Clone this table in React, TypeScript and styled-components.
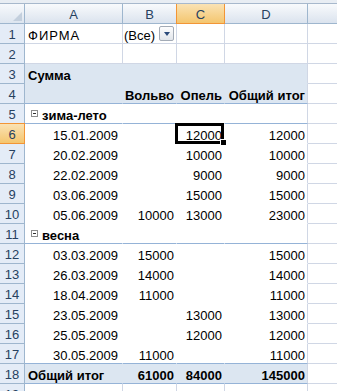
import * as React from 'react'
import styled, { createGlobalStyle } from 'styled-components'

const GRID = '#d0d7e5'
const HEAD_LINE = '#9eb6ce'
const PIVOT = '#dce6f1'
const PIVOT_LINE = '#95b3d7'
const ACTIVE_LINE = '#f29536'
const COLS = '25px 98px 54px 48px 83px 64px'

const GlobalStyle = createGlobalStyle`
  html, body { margin: 0; padding: 0; background: #fff; overflow: hidden; }
  body {
    font-family: "Liberation Sans", Arial, sans-serif;
    font-size: 13px;
    color: #000;
  }
`

const Sheet = styled.div`
  width: max-content;
`

const TopStrip = styled.div`
  height: 3px;
  background: #e8edf3;
  border-bottom: 1px solid #a7b8cc;
`

const Row = styled.div`
  display: grid;
  grid-template-columns: ${COLS};
  height: 20px;
`

const Corner = styled.div`
  position: relative;
  box-sizing: border-box;
  background: linear-gradient(#f7f9fc, #dde5ef);
  border-right: 1px solid ${HEAD_LINE};
  border-bottom: 1px solid ${HEAD_LINE};
  &::after {
    content: '';
    position: absolute;
    right: 2px;
    bottom: 2px;
    border-style: solid;
    border-width: 0 0 9px 9px;
    border-color: transparent transparent #c3cfdd transparent;
  }
`

const ColHead = styled.div<{ $active?: boolean }>`
  box-sizing: border-box;
  display: flex;
  align-items: flex-end;
  justify-content: center;
  padding-bottom: 1px;
  line-height: 15px;
  color: #27415f;
  background: ${p => (p.$active ? 'linear-gradient(#fae2b4, #f4c66f)' : 'linear-gradient(#f8fafc, #dbe3ee)')};
  border-right: 1px solid ${p => (p.$active ? ACTIVE_LINE : HEAD_LINE)};
  border-bottom: 1px solid ${p => (p.$active ? ACTIVE_LINE : HEAD_LINE)};
  box-shadow: ${p => (p.$active ? `-1px 0 0 ${ACTIVE_LINE}` : 'none')};
`

const RowHead = styled.div<{ $active?: boolean }>`
  box-sizing: border-box;
  display: flex;
  align-items: flex-end;
  justify-content: center;
  padding-bottom: 1px;
  line-height: 15px;
  color: #27415f;
  background: ${p => (p.$active ? 'linear-gradient(#fae2b4, #f4c66f)' : '#e4ecf7')};
  border-right: 1px solid ${p => (p.$active ? ACTIVE_LINE : HEAD_LINE)};
  border-bottom: 1px solid ${p => (p.$active ? ACTIVE_LINE : HEAD_LINE)};
  box-shadow: ${p => (p.$active ? `0 -1px 0 ${ACTIVE_LINE}` : 'none')};
`

interface ICellProps {
  $bg: string
  $bottom: string
  $right: string
  $bold?: boolean
  $align?: 'left' | 'right'
  $padL?: number
  $padR?: number
  $selected?: boolean
}

const Cell = styled.div<ICellProps>`
  position: relative;
  z-index: ${p => (p.$selected ? 1 : 'auto')};
  box-sizing: border-box;
  display: flex;
  align-items: flex-end;
  justify-content: ${p => (p.$align === 'right' ? 'flex-end' : 'flex-start')};
  padding: 0 ${p => p.$padR ?? 2}px 0 ${p => p.$padL ?? 3}px;
  line-height: 15px;
  white-space: nowrap;
  font-weight: ${p => (p.$bold ? 700 : 400)};
  background: ${p => p.$bg};
  border-right: 1px solid ${p => p.$right};
  border-bottom: 1px solid ${p => p.$bottom};
  &::after {
    content: '';
    display: ${p => (p.$selected ? 'block' : 'none')};
    position: absolute;
    left: -2px;
    top: -1px;
    right: 0;
    bottom: -1px;
    border: 3px solid #000;
  }
  &::before {
    content: '';
    display: ${p => (p.$selected ? 'block' : 'none')};
    position: absolute;
    right: -2px;
    bottom: -2px;
    width: 5px;
    height: 5px;
    background: #000;
    outline: 1px solid #fff;
    z-index: 1;
  }
`

// the page field caption is drawn a little wider in Excel than in Arial
const FieldName = styled.span`
  letter-spacing: 1px;
`

const MinusBox = styled.span`
  box-sizing: border-box;
  width: 7px;
  height: 7px;
  margin: 0 4px 6px 3px;
  border: 1px solid #8d8d8d;
  background: #fff;
  display: flex;
  align-items: center;
  justify-content: center;
  &::after {
    content: '';
    width: 3px;
    height: 1px;
    background: #333;
  }
`

const DropButton = styled.span`
  box-sizing: border-box;
  width: 15px;
  height: 15px;
  margin-left: auto;
  align-self: center;
  border: 1px solid #a3abb6;
  border-radius: 2px;
  background: linear-gradient(#fdfdfe, #e1e5ea);
  display: flex;
  align-items: center;
  justify-content: center;
  &::after {
    content: '';
    border-style: solid;
    border-width: 4px 3px 0 3px;
    border-color: #2a4a7a transparent transparent transparent;
  }
`

type Kind = 'plain' | 'title' | 'header' | 'group' | 'item' | 'itemLast' | 'total'

interface IRow {
  n: number
  kind: Kind
  cells: string[]
}

const rows: IRow[] = [
  { n: 1, kind: 'plain', cells: ['ФИРМА', '(Все)', '', ''] },
  { n: 2, kind: 'plain', cells: ['', '', '', ''] },
  { n: 3, kind: 'title', cells: ['Сумма', '', '', ''] },
  { n: 4, kind: 'header', cells: ['', 'Вольво', 'Опель', 'Общий итог'] },
  { n: 5, kind: 'group', cells: ['зима-лето', '', '', ''] },
  { n: 6, kind: 'item', cells: ['15.01.2009', '', '12000', '12000'] },
  { n: 7, kind: 'item', cells: ['20.02.2009', '', '10000', '10000'] },
  { n: 8, kind: 'item', cells: ['22.02.2009', '', '9000', '9000'] },
  { n: 9, kind: 'item', cells: ['03.06.2009', '', '15000', '15000'] },
  { n: 10, kind: 'item', cells: ['05.06.2009', '10000', '13000', '23000'] },
  { n: 11, kind: 'group', cells: ['весна', '', '', ''] },
  { n: 12, kind: 'item', cells: ['03.03.2009', '15000', '', '15000'] },
  { n: 13, kind: 'item', cells: ['26.03.2009', '14000', '', '14000'] },
  { n: 14, kind: 'item', cells: ['18.04.2009', '11000', '', '11000'] },
  { n: 15, kind: 'item', cells: ['23.05.2009', '', '13000', '13000'] },
  { n: 16, kind: 'item', cells: ['25.05.2009', '', '12000', '12000'] },
  { n: 17, kind: 'itemLast', cells: ['30.05.2009', '11000', '', '11000'] },
  { n: 18, kind: 'total', cells: ['Общий итог', '61000', '84000', '145000'] },
  { n: 19, kind: 'plain', cells: ['', '', '', ''] },
]

const bgOf = (k: Kind) => (k === 'title' || k === 'header' || k === 'total' ? PIVOT : '#fff')

const bottomOf = (k: Kind) => {
  switch (k) {
    case 'plain':
      return GRID
    case 'title':
      return PIVOT
    case 'item':
      return '#fff'
    default:
      return PIVOT_LINE
  }
}

const renderCell = (row: IRow, col: number) => {
  const { kind, cells, n } = row
  const text = cells[col]
  const bg = bgOf(kind)
  const right = col === 3 || kind === 'plain' ? GRID : bg
  const bold = kind === 'title' || kind === 'header' || kind === 'total' || (kind === 'group' && col === 0)
  const isDate = (kind === 'item' || kind === 'itemLast') && col === 0
  const align = col > 0 || isDate ? 'right' : 'left'
  const selected = n === 6 && col === 2

  if (n === 1 && col === 0) {
    return (
      <Cell key={col} $bg={bg} $bottom={bottomOf(kind)} $right={right}>
        <FieldName>{text}</FieldName>
      </Cell>
    )
  }
  if (n === 1 && col === 1) {
    return (
      <Cell key={col} $bg={bg} $bottom={bottomOf(kind)} $right={right} $padL={1} $padR={2}>
        {text}
        <DropButton />
      </Cell>
    )
  }
  return (
    <Cell
      key={col}
      $bg={bg}
      $bottom={bottomOf(kind)}
      $right={right}
      $bold={bold}
      $align={align}
      $padR={isDate ? 4 : 2}
      $selected={selected}
    >
      {kind === 'group' && col === 0 && <MinusBox />}
      {text}
    </Cell>
  )
}

export default function App() {
  return (
    <>
      <GlobalStyle />
      <Sheet>
        <TopStrip />
        <Row>
          <Corner />
          {['A', 'B', 'C', 'D'].map(c => (
            <ColHead key={c} $active={c === 'C'}>{c}</ColHead>
          ))}
          <ColHead />
        </Row>
        {rows.map(r => (
          <Row key={r.n}>
            <RowHead $active={r.n === 6}>{r.n}</RowHead>
            {[0, 1, 2, 3].map(c => renderCell(r, c))}
            <Cell $bg="#fff" $bottom={GRID} $right={GRID} />
          </Row>
        ))}
      </Sheet>
    </>
  )
}
